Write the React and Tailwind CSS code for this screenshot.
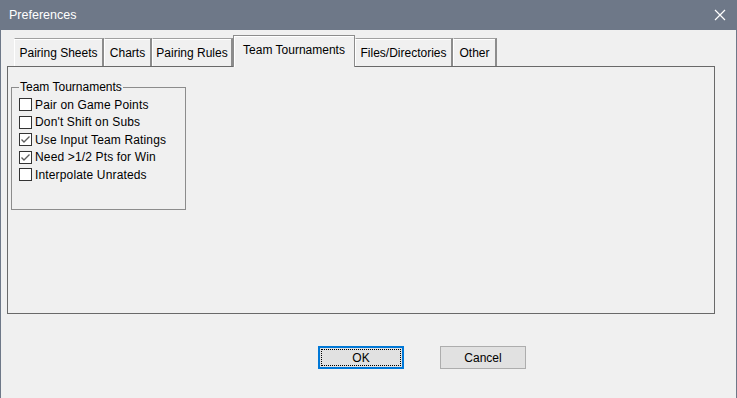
import React from "react";

const tabs = [
  { label: "Pairing Sheets", w: "w-[90px]" },
  { label: "Charts", w: "w-[48px]" },
  { label: "Pairing Rules", w: "w-[81px]" },
  { label: "Team Tournaments", w: "w-[122px]", active: true },
  { label: "Files/Directories", w: "w-[98px]" },
  { label: "Other", w: "w-[44px]" },
];

const options = [
  { label: "Pair on Game Points", checked: false },
  { label: "Don't Shift on Subs", checked: false },
  { label: "Use Input Team Ratings", checked: true },
  { label: "Need >1/2 Pts for Win", checked: true },
  { label: "Interpolate Unrateds", checked: false },
];

function Checkbox({ checked }) {
  return (
    <span className="w-[13px] h-[13px] border border-[#333333] bg-white flex items-center justify-center shrink-0">
      {checked && (
        <svg width="11" height="11" viewBox="0 0 11 11">
          <path d="M1.5 5.5 L4 8 L9.5 2.5" fill="none" stroke="#5f5f5f" strokeWidth="1.4" />
        </svg>
      )}
    </span>
  );
}

export default function App() {
  return (
    <div
      className="w-[737px] h-[398px] flex flex-col bg-[#f0f0f0] border-x border-[#6e7888] text-[12px] text-black overflow-hidden"
      style={{ fontFamily: '"Liberation Sans", Arial, sans-serif' }}
    >
      {/* Title bar */}
      <div className="h-[30px] bg-[#6e7888] flex items-center justify-between pl-[8px] pr-[10px] shrink-0">
        <span className="text-white text-[12.5px]">Preferences</span>
        <svg width="12" height="12" viewBox="0 0 12 12">
          <path d="M1 1 L11 11 M11 1 L1 11" stroke="white" strokeWidth="1.2" />
        </svg>
      </div>

      {/* Tabs */}
      <div className="flex items-end pl-[13px] mt-[5px] h-[31px] relative z-10">
        {tabs.map((t) =>
          t.active ? (
            <div
              key={t.label}
              className={`${t.w} h-[32px] -mb-[1px] bg-[#f0f0f0] border-t border-l border-r border-[#8c8c8c] shadow-[inset_1px_1px_0_#ffffff] flex items-start justify-center pt-[5px]`}
            >
              {t.label}
            </div>
          ) : (
            <div
              key={t.label}
              className={`${t.w} h-[28px] bg-[#f0f0f0] border-t border-l border-r-2 border-t-[#a0a0a0] border-l-[#ffffff] border-r-[#8c8c8c] shadow-[inset_0_1px_0_#ffffff] flex items-center justify-center`}
            >
              {t.label}
            </div>
          )
        )}
      </div>

      {/* Panel */}
      <div className="ml-[6px] w-[708px] h-[248px] border border-[#696969] pt-[13px] pl-[3px]">
        <fieldset className="w-[175px] h-[130px] border border-[#8c8c8c] pl-[7px] pt-[2px] m-0">
          <legend className="px-[1px] leading-[14px]">Team Tournaments</legend>
          <div className="flex flex-col">
            {options.map((o) => (
              <div key={o.label} className="flex items-center gap-[3px] h-[17.5px]">
                <Checkbox checked={o.checked} />
                <span className="leading-[14px] tracking-[0.15px]">{o.label}</span>
              </div>
            ))}
          </div>
        </fieldset>
      </div>

      {/* Buttons */}
      <div className="flex justify-start pl-[317px] gap-[36px] mt-[32px]">
        <button className="w-[86px] h-[23px] bg-[#e1e1e1] border-2 border-[#0078d7] flex items-center justify-center p-[1px]">
          <span className="w-full h-full border border-dotted border-black flex items-center justify-center">OK</span>
        </button>
        <button className="w-[86px] h-[23px] bg-[#e1e1e1] border border-[#adadad] flex items-center justify-center">
          Cancel
        </button>
      </div>
    </div>
  );
}
